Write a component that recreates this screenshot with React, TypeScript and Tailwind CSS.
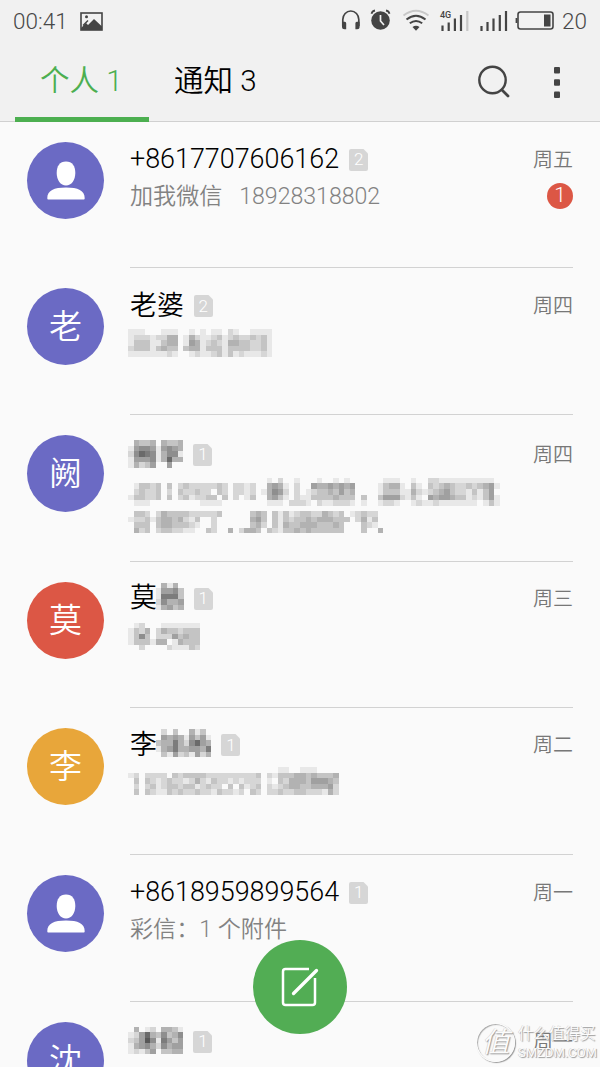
import type { ReactNode } from 'react'

type Thread = {
  avatar: string
  color: string
  name: string
  nameMask?: string[]
  sim: number
  day: string
  text?: string
  textMask?: string[]
  unread?: number
  top: string
  gap: string
}

// each digit is the darkness of one mosaic cell
const threads: Thread[] = [
  {
    avatar: '', color: 'bg-[#6b6ac4]', name: '+8617707606162', sim: 2, day: '周五',
    text: '加我微信\u00a0\u00a0\u00a018928318802', unread: 1, top: 'pt-[20px]', gap: 'mt-[4px]',
  },
  {
    avatar: '老', color: 'bg-[#6b6ac4]', name: '老婆', sim: 2, day: '周四',
    textMask: [
      '11100011100101011021001111',
      '12221224401421123123223231',
      '13331134401541232144332231',
      '23331343303441333133332231',
      '11111112100121123131211121',
    ],
    top: 'pt-[20px]', gap: 'mt-[5px]',
  },
  {
    avatar: '阙', color: 'bg-[#6b6ac4]', name: '', nameMask: ['0433404334', '1566515654', '2687614661', '1555614844', '1423500500'],
    sim: 1, day: '周四',
    textMask: [
      '0000000000000000000000000102001000100101000000111001002211111111110',
      '0133230302322222320221200454102005445454500001344103103234322323451',
      '0232230203223220320221201465202012334353400001333114212345322131350',
      '1332230302312233030201300453102113333433303003555213105455433121351',
      '0111000000000111100000000111022210211222101001221001211211111110131',
      '0000000000000000000000000000000000000000000000000000000000000000000',
      '0332024333322222300000343031312332243230123220000000000000000000000',
      '1223134434213002000000453031323343444333024130000000000000000000000',
      '0333034433321002000000342031433444333430003210000000000000000000000',
      '0423023322110032004024430321334343333330003004000000000000000000000',
    ],
    top: 'pt-[22px]', gap: 'mt-[5px]',
  },
  {
    avatar: '莫', color: 'bg-[#dc5745]', name: '莫', nameMask: ['04140', '15563', '17773', '26445', '14534'],
    sim: 1, day: '周三',
    textMask: ['0120001111111', '1324024332333', '1363022253433', '1333144014333', '0020000211132'],
    top: 'pt-[19px]', gap: 'mt-[6px]',
  },
  {
    avatar: '李', color: 'bg-[#e8a63a]', name: '李', nameMask: ['0203004130', '0545415351', '3447426854', '1457445547', '0315231524'],
    sim: 1, day: '周二',
    textMask: [
      '00000000000000000000000000011001110000',
      '12022220323333222222222302133344343334',
      '03032123221242132212122201032444355543',
      '02023123323312322030312302123443344452',
      '03032113232232213221203202232233222142',
    ],
    top: 'pt-[19px]', gap: 'mt-[4px]',
  },
  {
    avatar: '', color: 'bg-[#6b6ac4]', name: '+8618959899564', sim: 1, day: '周一',
    text: '彩信：1 个附件', top: 'pt-[20px]', gap: 'mt-[4px]',
  },
  {
    avatar: '沈', color: 'bg-[#6b6ac4]', name: '', nameMask: ['0401204431', '1258436346', '2359617535', '1456426455', '1213503344'],
    sim: 1, day: '周一', top: 'pt-[22px]', gap: 'mt-[4px]',
  },
]

function Mosaic({ rows }: { rows: string[] }) {
  return (
    <div className="flex flex-col shrink-0">
      {rows.map((row, y) => (
        <div key={y} className="flex">
          {row.split('').map((c, x) => {
            const v = 250 - Number(c) * 18
            return <span key={x} className="w-[5.56px] h-[5.56px]" style={{ background: `rgb(${v},${v},${v})` }} />
          })}
        </div>
      ))}
    </div>
  )
}

function Avatar({ color, children }: { color: string; children: ReactNode }) {
  return (
    <div className={`mt-[20px] w-[77px] h-[77px] shrink-0 rounded-full flex items-center justify-center text-white text-[33px] leading-none ${color}`}>
      {children}
    </div>
  )
}

function PersonIcon() {
  return (
    <svg width="38" height="39" viewBox="0 0 38 39" fill="#fff">
      <path d="M19 0.5c6.3 0 9.3 4.500 9.300 11.500S24.500 24.500 19 24.500 9.700 19 9.700 12 12.700 0.500 19 0.500z" />
      <path d="M0.300 37.200C0.300 29.500 7 26.500 19 26.500s18.700 3 18.700 10.700c0 .9-.4 1.300-1.200 1.300h-35c-.8 0-1.200-.4-1.200-1.300z" />
    </svg>
  )
}

function SimBadge({ n }: { n: number }) {
  return (
    <div className="relative w-[19px] h-[22px] shrink-0 flex items-center justify-center text-white text-[17px] leading-none">
      <svg className="absolute inset-0" width="19" height="22" viewBox="0 0 19 22">
        <path d="M2 0h12.500L19 4.500V20a2 2 0 0 1-2 2H2a2 2 0 0 1-2-2V2a2 2 0 0 1 2-2z" fill="#d6d6d6" />
      </svg>
      <span className="relative">{n}</span>
    </div>
  )
}

function StatusBar() {
  return (
    <div className="flex items-center h-[42px] pl-[13px] pr-[13px] text-[22.500px] leading-none text-[#484848]">
      <span className="w-[67px]">00:41</span>
      <svg width="23" height="19" viewBox="0 0 23 19">
        <rect x="1" y="1" width="21" height="17" fill="none" stroke="#444" strokeWidth="1.600" />
        <path d="M1 18v-2l5-5 2 2 6-6 8 7.500V18z" fill="#444" />
        <path d="M3 13.500L8 8.500" stroke="#444" strokeWidth="1.500" />
        <circle cx="6.500" cy="4.800" r="1.500" fill="#444" />
      </svg>
      <svg className="ml-auto" width="216" height="24" viewBox="0 0 216 24" fill="none" stroke="#444">
        {/* headphones */}
        <path d="M2.800 17V10.500a8 8.500 0 0 1 16 0V17" strokeWidth="1.700" />
        <path d="M2 12.800h2.800q1.400 0 1.400 1.500v6H4.500q-2.500 0-2.500-2.500zM19.600 12.800h-2.800q-1.400 0-1.400 1.500v6h1.700q2.500 0 2.500-2.500z" fill="#444" stroke="none" />
        {/* alarm */}
        <circle cx="40.500" cy="11.500" r="9.300" fill="#444" stroke="none" />
        <path d="M31.500 4.700q.7-2.700 3.500-3.200M49.500 4.700q-.7-2.700-3.500-3.200" strokeWidth="1.800" />
        <path d="M40.500 6v6l3.500 4" stroke="#f1f1f1" strokeWidth="1.700" />
        {/* wifi */}
        <path d="M63.500 6.500q12.500-9.500 25 0" stroke="#c8c8c8" strokeWidth="1.800" />
        <path d="M66.500 10.500q9.500-7.500 19 0M69.800 14.300q6.200-4.600 12.400 0" strokeWidth="2" />
        <path d="M72.500 18q3.500-2.500 7 0l-3.500 3.700z" fill="#444" stroke="none" />
        <g strokeWidth="2.200">
          <path d="M102.500 16.500v5.500M108.700 13.500V22M114.900 9.500V22M121 6V22" />
          <path d="M127.300 2V22" stroke="#c8c8c8" />
          <path d="M141.500 17v5M147.500 13v9M153.500 9.500V22M159.800 6V22M166 2V22" />
        </g>
        <text x="100" y="8.500" fontSize="9" fontWeight="500" fill="#444" stroke="none">4G</text>
        {/* battery */}
        <rect x="178" y="3" width="35" height="17" rx="2.500" strokeWidth="1.600" />
        <path d="M176.500 9v5" strokeWidth="1.800" />
        <rect x="204" y="5.500" width="6.500" height="12" fill="#444" stroke="none" />
      </svg>
      <span className="ml-[6px]">20</span>
    </div>
  )
}

function Tabs() {
  return (
    <div className="flex h-[79px] pl-[15px] text-[29.500px] leading-none">
      <div className="w-[134px] h-[80px] flex items-end border-b-[5px] border-[#4caf50] text-[#4caf50] whitespace-nowrap">
        <span className="pl-[25px] pb-[21px]">个人 1</span>
      </div>
      <div className="h-[80px] flex items-end pl-[25px] pb-[26px] text-black whitespace-nowrap">通知 3</div>
      <svg className="ml-auto mt-[21px]" width="36" height="36" viewBox="0 0 36 36" fill="none" stroke="#444" strokeLinecap="round">
        <circle cx="16.500" cy="17" r="13.200" strokeWidth="2.400" />
        <path d="M26 27l6 6" strokeWidth="2.800" />
      </svg>
      <svg className="ml-[42px] mr-[40px] mt-[25px]" width="6" height="32" viewBox="0 0 6 32" fill="#444">
        <rect width="6" height="6.500" rx="1" />
        <rect y="12.300" width="6" height="6.500" rx="1" />
        <rect y="24.500" width="6" height="6.500" rx="1" />
      </svg>
    </div>
  )
}

function ThreadRow({ t }: { t: Thread }) {
  return (
    <li className="flex h-[146.7px] shrink-0 pl-[27px] pr-[27px]">
      <Avatar color={t.color}>{t.avatar || <PersonIcon />}</Avatar>
      <div className={`ml-[26px] flex-1 min-w-0 border-b border-[#d2d2d2] ${t.top}`}>
        <div className="flex items-center h-[36px] text-[26.9px] leading-none text-black">
          <span>{t.name}</span>
          {t.nameMask && (
            <div className={t.name ? '-ml-[1px] mb-[4px]' : '-ml-[2px] mb-[2px]'}>
              <Mosaic rows={t.nameMask} />
            </div>
          )}
          <div className="ml-[10px]">
            <SimBadge n={t.sim} />
          </div>
          <span className="ml-auto text-[20px] text-[#777]">{t.day}</span>
        </div>
        {t.text && (
          <div className={`flex items-center h-[30px] text-[23.100px] leading-none text-[#828282] ${t.gap}`}>
            <span className="whitespace-nowrap">{t.text}</span>
            {t.unread && (
              <span className="ml-auto mb-[2px] w-[26px] h-[26px] rounded-full bg-[#dc5745] text-white text-[21px] flex items-center justify-center">
                {t.unread}
              </span>
            )}
          </div>
        )}
        {t.textMask && (
          <div className={`-ml-[2px] ${t.gap}`}>
            <Mosaic rows={t.textMask} />
          </div>
        )}
      </div>
    </li>
  )
}

function Watermark() {
  return (
    <div className="absolute left-[476px] top-[1023px] flex items-center text-[#fcfcfc] [text-shadow:1px_1px_1px_#999,-0.5px_-0.5px_0_#ccc]">
      <div className="w-[39px] h-[39px] rounded-full border-[1.5px] border-[#fcfcfc] shadow-[1px_1px_1px_#999,inset_1px_1px_1px_#aaa] flex items-center justify-center text-[28px] leading-none italic">
        值
      </div>
      <div className="ml-[3px] flex flex-col whitespace-nowrap">
        <span className="text-[15.5px] leading-[20px]">什么值得买</span>
        <span className="text-[13px] leading-[17px] font-normal">SMZDM.COM</span>
      </div>
    </div>
  )
}

export default function App() {
  return (
    <div className="relative w-[600px] h-[1067px] overflow-hidden bg-[#fafafa] font-[350] font-['Roboto','Noto_Sans_CJK_SC',sans-serif]">
      <header className="h-[122px] bg-[#f1f1f1] border-b border-[#d0d0d0]">
        <StatusBar />
        <Tabs />
      </header>
      <ul className="flex flex-col -mt-[0.500px]">
        {threads.map((t, i) => (
          <ThreadRow key={i} t={t} />
        ))}
      </ul>
      <button className="absolute left-[253px] top-[940px] w-[94px] h-[94px] rounded-full bg-[#52ad54] flex items-center justify-center">
        <svg width="38" height="40" viewBox="0 0 38 40" fill="none" stroke="#fff" strokeLinecap="round">
          <path d="M28 2H4.500Q2 2 2 4.500v31Q2 38 4.500 38h27q2.500 0 2.500-2.500V11" strokeWidth="2.500" strokeLinecap="butt" />
          <path d="M12.500 26.500L35.500 3.500" strokeWidth="3.300" />
        </svg>
      </button>
      <Watermark />
    </div>
  )
}
